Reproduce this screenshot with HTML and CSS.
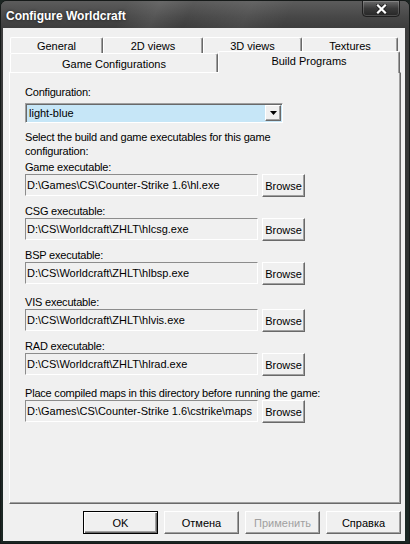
FILE: index.html
```html
<!DOCTYPE html>
<html lang="en">
<head>
    <meta charset="UTF-8">
    <title>Configure Worldcraft</title>
    <link rel="stylesheet" href="styles.css">
</head>
<body>
    <div class="window">
        <div class="titlebar">
            <span class="title">Configure Worldcraft</span>
            <div class="close-btn">
                <svg width="11" height="10" viewBox="0 0 11 10">
                    <path d="M2 1.5 L9 8.5 M9 1.5 L2 8.5" stroke="#222" stroke-width="4" stroke-linecap="square"/>
                    <path d="M2 1.5 L9 8.5 M9 1.5 L2 8.5" stroke="#fff" stroke-width="2.2" stroke-linecap="square"/>
                </svg>
            </div>
        </div>

        <div class="client">
            <div class="tabs">
                <div class="tab-row back">
                    <div class="tab tab-general">General</div>
                    <div class="tab tab-2d">2D views</div>
                    <div class="tab tab-3d">3D views</div>
                    <div class="tab tab-textures">Textures</div>
                </div>
                <div class="tab-row front">
                    <div class="tab tab-games">Game Configurations</div>
                    <div class="tab tab-build active">Build Programs</div>
                </div>
            </div>

            <div class="panel">
                <div class="label">Configuration:</div>
                <div class="select">
                    <span class="select-value">light-blue</span>
                    <span class="select-arrow">
                        <svg width="7" height="4" viewBox="0 0 7 4"><path d="M0 0 H7 L3.5 4 Z" fill="#000"/></svg>
                    </span>
                </div>

                <p class="hint">Select the build and game executables for this game configuration:</p>

                <div class="group g-game">
                    <div class="label">Game executable:</div>
                    <div class="row">
                        <div class="field">D:\Games\CS\Counter-Strike 1.6\hl.exe</div>
                        <div class="btn browse">Browse</div>
                    </div>
                </div>

                <div class="group g-csg">
                    <div class="label">CSG executable:</div>
                    <div class="row">
                        <div class="field">D:\CS\Worldcraft\ZHLT\hlcsg.exe</div>
                        <div class="btn browse">Browse</div>
                    </div>
                </div>

                <div class="group g-bsp">
                    <div class="label">BSP executable:</div>
                    <div class="row">
                        <div class="field">D:\CS\Worldcraft\ZHLT\hlbsp.exe</div>
                        <div class="btn browse">Browse</div>
                    </div>
                </div>

                <div class="group g-vis">
                    <div class="label">VIS executable:</div>
                    <div class="row">
                        <div class="field">D:\CS\Worldcraft\ZHLT\hlvis.exe</div>
                        <div class="btn browse">Browse</div>
                    </div>
                </div>

                <div class="group g-rad">
                    <div class="label">RAD executable:</div>
                    <div class="row">
                        <div class="field">D:\CS\Worldcraft\ZHLT\hlrad.exe</div>
                        <div class="btn browse">Browse</div>
                    </div>
                </div>

                <div class="group g-maps">
                    <div class="label">Place compiled maps in this directory before running the game:</div>
                    <div class="row">
                        <div class="field">D:\Games\CS\Counter-Strike 1.6\cstrike\maps</div>
                        <div class="btn browse">Browse</div>
                    </div>
                </div>
            </div>

            <div class="buttons">
                <div class="btn dialog-btn default">OK</div>
                <div class="btn dialog-btn">Отмена</div>
                <div class="btn dialog-btn disabled">Применить</div>
                <div class="btn dialog-btn">Справка</div>
            </div>
        </div>
    </div>
</body>
</html>
```

FILE: styles.css
```css
body {
    margin: 0;
    padding: 0;
    background-color: #1c2522;
    font-family: 'Liberation Sans', Arial, sans-serif;
    font-size: 11px;
    color: #000;
}

.window {
    width: 410px;
    height: 544px;
    box-sizing: border-box;
    border: 1px solid #161a19;
    border-radius: 7px 7px 0 0;
    background: linear-gradient(to bottom, #5f5f5f 0, #3e3e3e 27px, #2a2e2d 60%, #1a2623 100%);
    display: flex;
    flex-direction: column;
    overflow: hidden;
}

/* title bar */
.titlebar {
    height: 27px;
    display: flex;
    justify-content: space-between;
    align-items: flex-start;
    background:
        linear-gradient(115deg, rgba(255, 255, 255, 0) 30%, rgba(255, 255, 255, 0.08) 38%, rgba(255, 255, 255, 0) 46%, rgba(255, 255, 255, 0.06) 60%, rgba(255, 255, 255, 0) 70%),
        linear-gradient(to bottom, #5c5c5c, #474747 60%, #3d3d3d);
    flex-shrink: 0;
}

.title {
    font-weight: bold;
    font-size: 12px;
    color: #fff;
    margin: 8px 0 0 5px;
    text-shadow: 0 0 3px rgba(0, 0, 0, 0.6);
}

.close-btn {
    width: 38px;
    height: 17px;
    box-sizing: border-box;
    margin: -1px 9px 0 0;
    border: 1px solid #1e1e1e;
    border-radius: 0 0 4px 4px;
    background: linear-gradient(to bottom, #6a6a6a, #3a3a3a 50%, #262626);
    box-shadow: inset 0 0 0 1px rgba(255, 255, 255, 0.18);
    display: flex;
    align-items: center;
    justify-content: center;
}

/* client area */
.client {
    flex: 1;
    margin: 0 4px 2px 2px;
    background-color: #f0f0f0;
    padding: 9px 4px 0 6px;
    display: flex;
    flex-direction: column;
}

.tabs {
    margin-left: 1px;
}

.tab-row {
    display: flex;
}

.tab-row.back {
    height: 16px;
}

.tab-row.front {
    height: 19px;
}

.tab {
    box-sizing: border-box;
    border-top: 1px solid #fff;
    border-left: 1px solid #fff;
    border-right: 1px solid #696969;
    box-shadow: inset -1px 0 #a0a0a0;
    border-radius: 2px 2px 0 0;
    background-color: #f0f0f0;
    display: flex;
    align-items: center;
    justify-content: center;
    padding-top: 1px;
}

.tab-general { width: 93px; }
.tab-2d { width: 100px; }
.tab-3d { width: 99px; }
.tab-textures { width: 96px; }
.tab-games { width: 208px; padding-top: 2px; }

.tab.active {
    width: 182px;
    height: 22px;
    margin-top: -2px;
    position: relative;
    z-index: 2;
    padding-top: 0;
    padding-bottom: 3px;
}

/* page */
.panel {
    height: 432px;
    box-sizing: border-box;
    border-top: 1px solid #fff;
    border-left: 1px solid #fff;
    border-right: 1px solid #696969;
    border-bottom: 1px solid #696969;
    box-shadow: inset -1px -1px #a0a0a0;
    padding: 13px 15px 0 15px;
    position: relative;
    z-index: 1;
}

.label {
    line-height: 13px;
    white-space: nowrap;
    letter-spacing: -0.2px;
}

.select {
    width: 258px;
    height: 20px;
    box-sizing: border-box;
    margin-top: 4px;
    border: 1px solid;
    border-color: #a0a0a0 #fff #fff #a0a0a0;
    box-shadow: inset 1px 1px #696969;
    background-color: #c6e6f7;
    display: flex;
    align-items: center;
    padding: 1px 1px 1px 3px;
}

.select-value {
    flex: 1;
}

.select-arrow {
    width: 16px;
    height: 16px;
    box-sizing: border-box;
    border: 1px solid;
    border-color: #fff #696969 #696969 #fff;
    box-shadow: inset -1px -1px #a0a0a0;
    background-color: #f0f0f0;
    display: flex;
    align-items: center;
    justify-content: center;
}

.hint {
    margin: 7px 0 0 0;
    line-height: 14px;
    width: 270px;
    letter-spacing: -0.2px;
}

.group { margin-top: 3px; }
.g-csg { margin-top: 8px; }
.g-bsp { margin-top: 8px; }
.g-vis { margin-top: 11px; }
.g-rad { margin-top: 8px; }
.g-maps { margin-top: 11px; }

.row {
    display: flex;
    gap: 4px;
}

.field {
    width: 233px;
    height: 22px;
    box-sizing: border-box;
    border: 1px solid;
    border-color: #8c8c8c #fff #fff #8c8c8c;
    padding-left: 1px;
    display: flex;
    align-items: center;
    white-space: nowrap;
    overflow: hidden;
}

.btn {
    box-sizing: border-box;
    border: 1px solid;
    border-color: #fff #696969 #696969 #fff;
    box-shadow: inset -1px -1px #a0a0a0;
    background-color: #f0f0f0;
    display: flex;
    align-items: center;
    justify-content: center;
}

.browse {
    width: 43px;
    height: 23px;
}

.buttons {
    display: flex;
    justify-content: flex-end;
    gap: 6px;
    margin-top: 7px;
}

.dialog-btn {
    width: 75px;
    height: 23px;
}

.dialog-btn.default {
    border: 1px solid #000;
    box-shadow: inset 1px 1px #fff, inset -1px -1px #696969, inset -2px -2px #a0a0a0;
}

.dialog-btn.disabled {
    color: #a0a0a0;
}
```
